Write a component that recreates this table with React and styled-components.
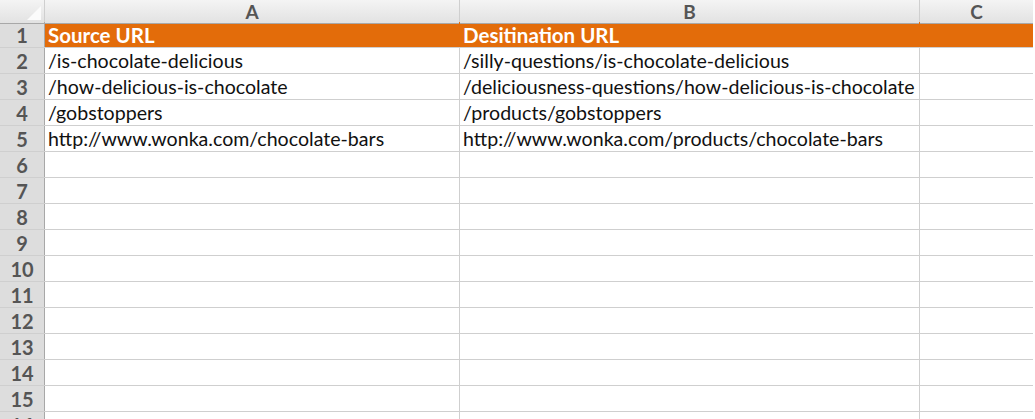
import React from "react";
import styled, { createGlobalStyle } from "styled-components";

const Global = createGlobalStyle`
  html, body { margin: 0; padding: 0; background: #fff; }
  body { font-family: "Lato", "Liberation Sans", sans-serif; }
`;

const COLS = "44px 414px 459px 113px";

const Sheet = styled.div`
  width: 1035px;
  height: 419px;
  overflow: hidden;
  display: flex;
  flex-direction: column;
  gap: 1px;
  background: #cfcfcf;
  border-right: 2px solid #fff;
  box-sizing: border-box;
`;

const Row = styled.div`
  display: grid;
  grid-template-columns: ${COLS};
  gap: 1px;
  background: ${(p) => (p.$accent ? "#e36c0a" : "#cfcfcf")};
  flex: none;
  height: ${(p) => (p.$head ? "21px" : "25px")};
  border-right: 1px solid #9a9a9a;
`;

const ColHead = styled.div`
  background: linear-gradient(#f4f4f4, #e2e2e2);
  display: flex;
  align-items: center;
  justify-content: center;
  color: #555;
  font-size: 19px;
  font-weight: 700;
  border-bottom: 1px solid #a8a8a8;
  margin-bottom: -1px;
  position: relative;
`;

const Corner = styled(ColHead)`
  &::after {
    content: "";
    position: absolute;
    right: 3px;
    bottom: 3px;
    width: 0;
    height: 0;
    border-left: 14px solid transparent;
    border-bottom: 14px solid #fbfbfb;
  }
`;

const RowNum = styled.div`
  background: #dddddd;
  color: #555;
  font-size: 20px;
  font-weight: 700;
  display: flex;
  align-items: center;
  justify-content: center;
  border-right: 1px solid #a8a8a8;
  margin-right: -1px;
`;

const Cell = styled.div`
  background: ${(p) => (p.$accent ? "#e36c0a" : "#fff")};
  color: ${(p) => (p.$accent ? "#fff" : "#111")};
  font-weight: ${(p) => (p.$accent ? 700 : 400)};
  font-size: ${(p) => (p.$accent ? "20.5px" : "19.6px")};
  padding-left: 3px;
  display: flex;
  align-items: center;
  white-space: nowrap;
  overflow: visible;
`;

const data = [
  ["Source URL", "Desitination URL"],
  ["/is-chocolate-delicious", "/silly-questions/is-chocolate-delicious"],
  ["/how-delicious-is-chocolate", "/deliciousness-questions/how-delicious-is-chocolate"],
  ["/gobstoppers", "/products/gobstoppers"],
  ["http://www.wonka.com/chocolate-bars", "http://www.wonka.com/products/chocolate-bars"],
];

export default function App() {
  const rows = Array.from({ length: 16 }, (_, i) => data[i] || ["", ""]);
  return (
    <>
      <Global />
      <Sheet>
        <Row $head>
          <Corner />
          <ColHead>A</ColHead>
          <ColHead>B</ColHead>
          <ColHead>C</ColHead>
        </Row>
        {rows.map((r, i) => (
          <Row key={i} $accent={i === 0}>
            <RowNum>{i + 1}</RowNum>
            <Cell $accent={i === 0}>{r[0]}</Cell>
            <Cell $accent={i === 0}>{r[1]}</Cell>
            <Cell $accent={i === 0} />
          </Row>
        ))}
      </Sheet>
    </>
  );
}
